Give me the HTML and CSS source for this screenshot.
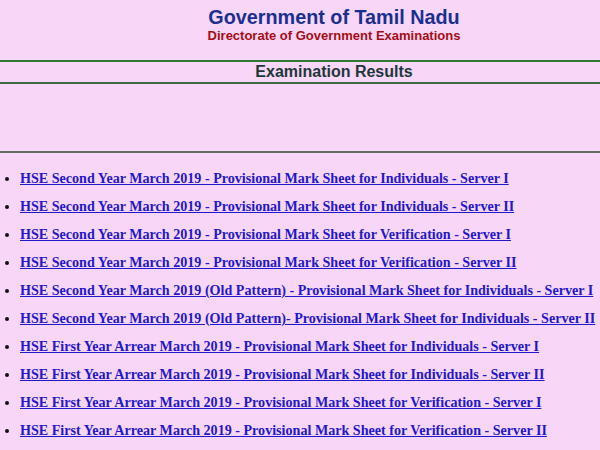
FILE: index.html
```html
<!DOCTYPE html>
<html>
<head>
<meta charset="utf-8">
<link rel="stylesheet" href="styles.css">
</head>
<body>
<div class="header">
  <div class="title">Government of Tamil Nadu</div>
  <div class="subtitle">Directorate of Government Examinations</div>
</div>
<div class="section">Examination Results</div>
<div class="spacer"></div>
<ul class="links">
  <li><a href="#">HSE Second Year March 2019 - Provisional Mark Sheet for Individuals - Server I</a></li>
  <li><a href="#">HSE Second Year March 2019 - Provisional Mark Sheet for Individuals - Server II</a></li>
  <li><a href="#">HSE Second Year March 2019 - Provisional Mark Sheet for Verification - Server I</a></li>
  <li><a href="#">HSE Second Year March 2019 - Provisional Mark Sheet for Verification - Server II</a></li>
  <li><a href="#">HSE Second Year March 2019 (Old Pattern) - Provisional Mark Sheet for Individuals - Server I</a></li>
  <li><a href="#">HSE Second Year March 2019 (Old Pattern)- Provisional Mark Sheet for Individuals - Server II</a></li>
  <li><a href="#">HSE First Year Arrear March 2019 - Provisional Mark Sheet for Individuals - Server I</a></li>
  <li><a href="#">HSE First Year Arrear March 2019 - Provisional Mark Sheet for Individuals - Server II</a></li>
  <li><a href="#">HSE First Year Arrear March 2019 - Provisional Mark Sheet for Verification - Server I</a></li>
  <li><a href="#">HSE First Year Arrear March 2019 - Provisional Mark Sheet for Verification - Server II</a></li>
</ul>
</body>
</html>
```
FILE: styles.css
```css
html, body {
  margin: 0;
  padding: 0;
  background: #f8d6f7;
  overflow: hidden;
}
body {
  width: 600px;
  height: 450px;
}
.header {
  padding: 6px 0 0 68px;
  height: 54px;
  text-align: center;
  font-family: "Liberation Sans", Arial, sans-serif;
  font-weight: bold;
}
.title {
  color: #1a3090;
  font-size: 19.8px;
  line-height: 22px;
}
.subtitle {
  color: #a80c14;
  font-size: 13px;
  line-height: 15px;
}
.section {
  border-top: 2px solid #2f7a32;
  border-bottom: 2px solid #3d6b44;
  padding-left: 68px;
  height: 20px;
  line-height: 20px;
  text-align: center;
  font-family: "Liberation Sans", Arial, sans-serif;
  font-weight: bold;
  font-size: 16px;
  color: #1d3838;
}
.spacer {
  height: 67px;
  border-bottom: 2px solid #5f6f62;
}
.links {
  margin: 0;
  padding: 12px 0 0 20px;
  font-family: "Liberation Serif", "Times New Roman", serif;
  font-weight: bold;
  font-size: 14.1px;
  line-height: 27.95px;
  white-space: nowrap;
}
.links li {
  color: #111;
}
.links a {
  color: #2418cc;
  text-decoration: underline;
}
```
